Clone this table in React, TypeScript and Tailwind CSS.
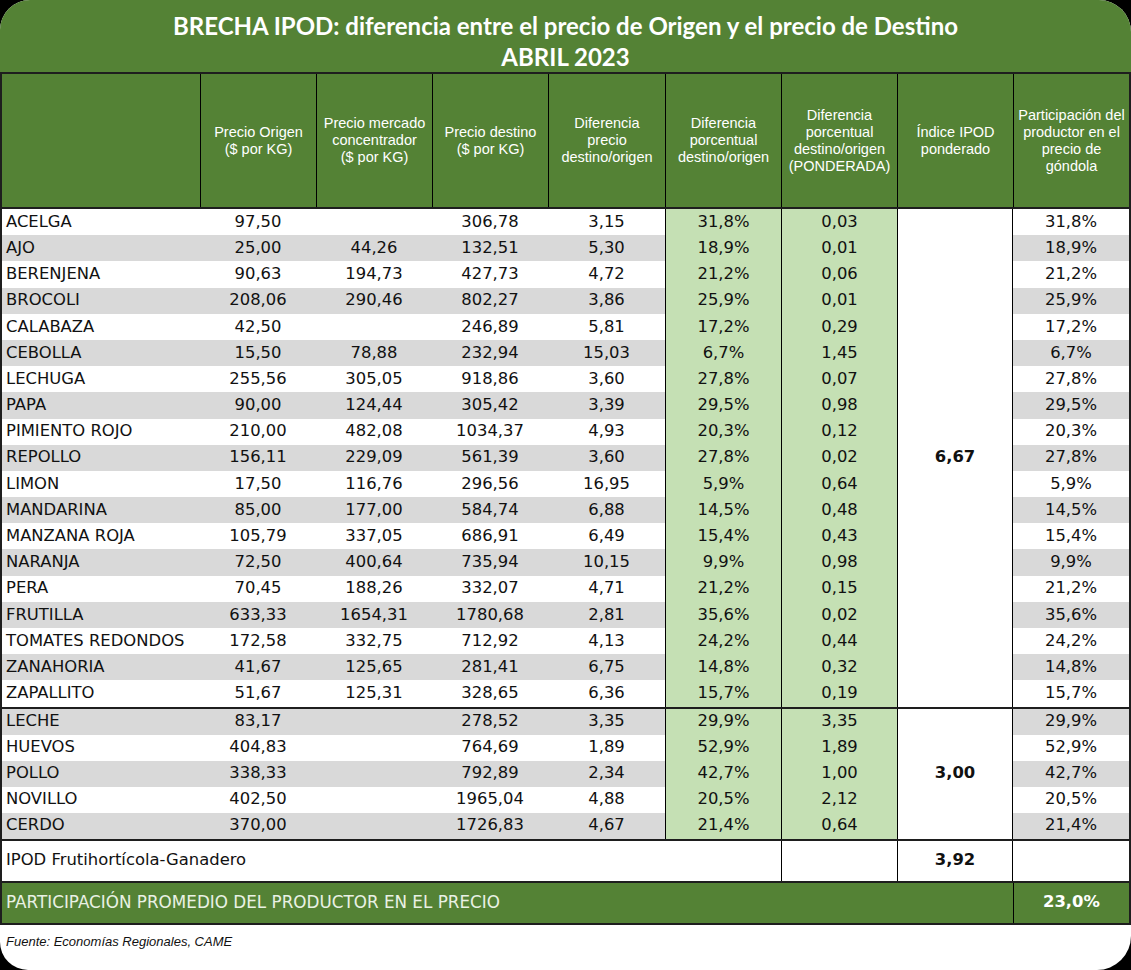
/**
 * BRECHA IPOD — tabla de diferencia entre precio de origen y destino
 */

type Row = {
  name: string;
  origen: string;
  mercado: string;
  destino: string;
  dif: string;
  pct: string;
  pond: string;
};

const FRUTIHORTICOLA: Row[] = [
  { name: "ACELGA", origen: "97,50", mercado: "", destino: "306,78", dif: "3,15", pct: "31,8%", pond: "0,03" },
  { name: "AJO", origen: "25,00", mercado: "44,26", destino: "132,51", dif: "5,30", pct: "18,9%", pond: "0,01" },
  { name: "BERENJENA", origen: "90,63", mercado: "194,73", destino: "427,73", dif: "4,72", pct: "21,2%", pond: "0,06" },
  { name: "BROCOLI", origen: "208,06", mercado: "290,46", destino: "802,27", dif: "3,86", pct: "25,9%", pond: "0,01" },
  { name: "CALABAZA", origen: "42,50", mercado: "", destino: "246,89", dif: "5,81", pct: "17,2%", pond: "0,29" },
  { name: "CEBOLLA", origen: "15,50", mercado: "78,88", destino: "232,94", dif: "15,03", pct: "6,7%", pond: "1,45" },
  { name: "LECHUGA", origen: "255,56", mercado: "305,05", destino: "918,86", dif: "3,60", pct: "27,8%", pond: "0,07" },
  { name: "PAPA", origen: "90,00", mercado: "124,44", destino: "305,42", dif: "3,39", pct: "29,5%", pond: "0,98" },
  { name: "PIMIENTO ROJO", origen: "210,00", mercado: "482,08", destino: "1034,37", dif: "4,93", pct: "20,3%", pond: "0,12" },
  { name: "REPOLLO", origen: "156,11", mercado: "229,09", destino: "561,39", dif: "3,60", pct: "27,8%", pond: "0,02" },
  { name: "LIMON", origen: "17,50", mercado: "116,76", destino: "296,56", dif: "16,95", pct: "5,9%", pond: "0,64" },
  { name: "MANDARINA", origen: "85,00", mercado: "177,00", destino: "584,74", dif: "6,88", pct: "14,5%", pond: "0,48" },
  { name: "MANZANA ROJA", origen: "105,79", mercado: "337,05", destino: "686,91", dif: "6,49", pct: "15,4%", pond: "0,43" },
  { name: "NARANJA", origen: "72,50", mercado: "400,64", destino: "735,94", dif: "10,15", pct: "9,9%", pond: "0,98" },
  { name: "PERA", origen: "70,45", mercado: "188,26", destino: "332,07", dif: "4,71", pct: "21,2%", pond: "0,15" },
  { name: "FRUTILLA", origen: "633,33", mercado: "1654,31", destino: "1780,68", dif: "2,81", pct: "35,6%", pond: "0,02" },
  { name: "TOMATES REDONDOS", origen: "172,58", mercado: "332,75", destino: "712,92", dif: "4,13", pct: "24,2%", pond: "0,44" },
  { name: "ZANAHORIA", origen: "41,67", mercado: "125,65", destino: "281,41", dif: "6,75", pct: "14,8%", pond: "0,32" },
  { name: "ZAPALLITO", origen: "51,67", mercado: "125,31", destino: "328,65", dif: "6,36", pct: "15,7%", pond: "0,19" },
];

const GANADERO: Row[] = [
  { name: "LECHE", origen: "83,17", mercado: "", destino: "278,52", dif: "3,35", pct: "29,9%", pond: "3,35" },
  { name: "HUEVOS", origen: "404,83", mercado: "", destino: "764,69", dif: "1,89", pct: "52,9%", pond: "1,89" },
  { name: "POLLO", origen: "338,33", mercado: "", destino: "792,89", dif: "2,34", pct: "42,7%", pond: "1,00" },
  { name: "NOVILLO", origen: "402,50", mercado: "", destino: "1965,04", dif: "4,88", pct: "20,5%", pond: "2,12" },
  { name: "CERDO", origen: "370,00", mercado: "", destino: "1726,83", dif: "4,67", pct: "21,4%", pond: "0,64" },
];

const HEADERS: string[][] = [
  ["Precio Origen", "($ por KG)"],
  ["Precio mercado", "concentrador", "($ por KG)"],
  ["Precio destino", "($ por KG)"],
  ["Diferencia", "precio", "destino/origen"],
  ["Diferencia", "porcentual", "destino/origen"],
  ["Diferencia", "porcentual", "destino/origen", "(PONDERADA)"],
  ["Índice IPOD", "ponderado"],
  ["Participación del", "productor en el", "precio de", "góndola"],
];

// first column is 198 + the 2px table border = 200px to the first rule
const COLS = "grid grid-cols-[198px_116px_116px_116px_117px_116px_116px_116px_116px]";

function Group({
  rows,
  offset,
  index,
  rowClass,
  spanClass,
}: {
  rows: Row[];
  offset: number;
  index: string;
  rowClass: string;
  spanClass: string;
}) {
  return (
    <div className={`${COLS} ${rowClass} border-b-2 border-[#1e1e1e]`}>
      <div
        className={`col-start-8 row-start-1 ${spanClass} flex items-center justify-center border-x border-black bg-white font-bold`}
      >
        {index}
      </div>
      {rows.map((r, i) => {
        const gray = (offset + i) % 2 === 1;
        const bg = gray ? "bg-[#d9d9d9]" : "bg-white";
        return [
          <div key={r.name + "n"} className={`${bg} col-start-1 flex items-center pl-[4px]`}>
            {r.name}
          </div>,
          <div key={r.name + "o"} className={`${bg} flex items-center justify-center`}>{r.origen}</div>,
          <div key={r.name + "m"} className={`${bg} flex items-center justify-center`}>{r.mercado}</div>,
          <div key={r.name + "d"} className={`${bg} flex items-center justify-center`}>{r.destino}</div>,
          <div key={r.name + "f"} className={`${bg} flex items-center justify-center`}>{r.dif}</div>,
          <div key={r.name + "p"} className="flex items-center justify-center border-l border-black bg-[#c5e0b4]">
            {r.pct}
          </div>,
          <div key={r.name + "w"} className="flex items-center justify-center border-l border-black bg-[#c5e0b4]">
            {r.pond}
          </div>,
          <div key={r.name + "g"} className={`${bg} col-start-9 flex items-center justify-center`}>{r.pct}</div>,
        ];
      })}
    </div>
  );
}

export default function App() {
  return (
    <div className="h-[970px] w-[1131px] overflow-hidden bg-black">
      <div className="flex h-[970px] w-[1131px] flex-col overflow-hidden rounded-tl-[30px] rounded-tr-[32px] rounded-br-[34px] rounded-bl-[28px] bg-white">
        {/* title band */}
        <div className="flex h-[74px] flex-col items-center justify-center border-b-2 border-[#1e1e1e] bg-[#548235] pt-[10px] font-['Lato',sans-serif] text-[24px] font-bold leading-[31px] text-white">
          <div>BRECHA IPOD: diferencia entre el precio de Origen y el precio de Destino</div>
          <div>ABRIL 2023</div>
        </div>

        <div className="border-x-2 border-[#1e1e1e] font-['DejaVu_Sans',sans-serif] text-[16.4px] text-[#111]">
          {/* column headers */}
          <div className={`${COLS} h-[135px] border-b-2 border-[#1e1e1e] bg-[#548235] font-['Liberation_Sans',Arial,sans-serif] text-[14.5px] leading-[17px] text-white`}>
            <div />
            {HEADERS.map((lines, i) => (
              <div key={i} className="flex flex-col items-center justify-center border-l border-black text-center">
                {lines.map((l) => (
                  <div key={l}>{l}</div>
                ))}
              </div>
            ))}
          </div>

          <Group rows={FRUTIHORTICOLA} offset={0} index="6,67" rowClass="auto-rows-[26.2px]" spanClass="row-span-19" />
          <Group rows={GANADERO} offset={19} index="3,00" rowClass="auto-rows-[26px]" spanClass="row-span-5" />

          {/* IPOD total */}
          <div className={`${COLS} h-[42px] border-b-2 border-[#1e1e1e]`}>
            <div className="col-span-6 flex items-center pl-[4px]">IPOD Frutihortícola-Ganadero</div>
            <div className="border-l border-black" />
            <div className="flex items-center justify-center border-x border-black font-bold">3,92</div>
            <div />
          </div>

          {/* participación promedio */}
          <div className={`${COLS} h-[42px] border-b-2 border-[#1e1e1e] bg-[#548235]`}>
            <div className="col-span-8 flex items-center pl-[4px] text-[16.8px] text-[#e9f1e4]">
              PARTICIPACIÓN PROMEDIO DEL PRODUCTOR EN EL PRECIO
            </div>
            <div className="flex items-center justify-center border-l border-black font-bold text-white">23,0%</div>
          </div>
        </div>

        <div className="pl-[6px] pt-[7px] font-['Liberation_Sans',Arial,sans-serif] text-[13px] italic text-[#111]">
          Fuente: Economías Regionales, CAME
        </div>
      </div>
    </div>
  );
}
